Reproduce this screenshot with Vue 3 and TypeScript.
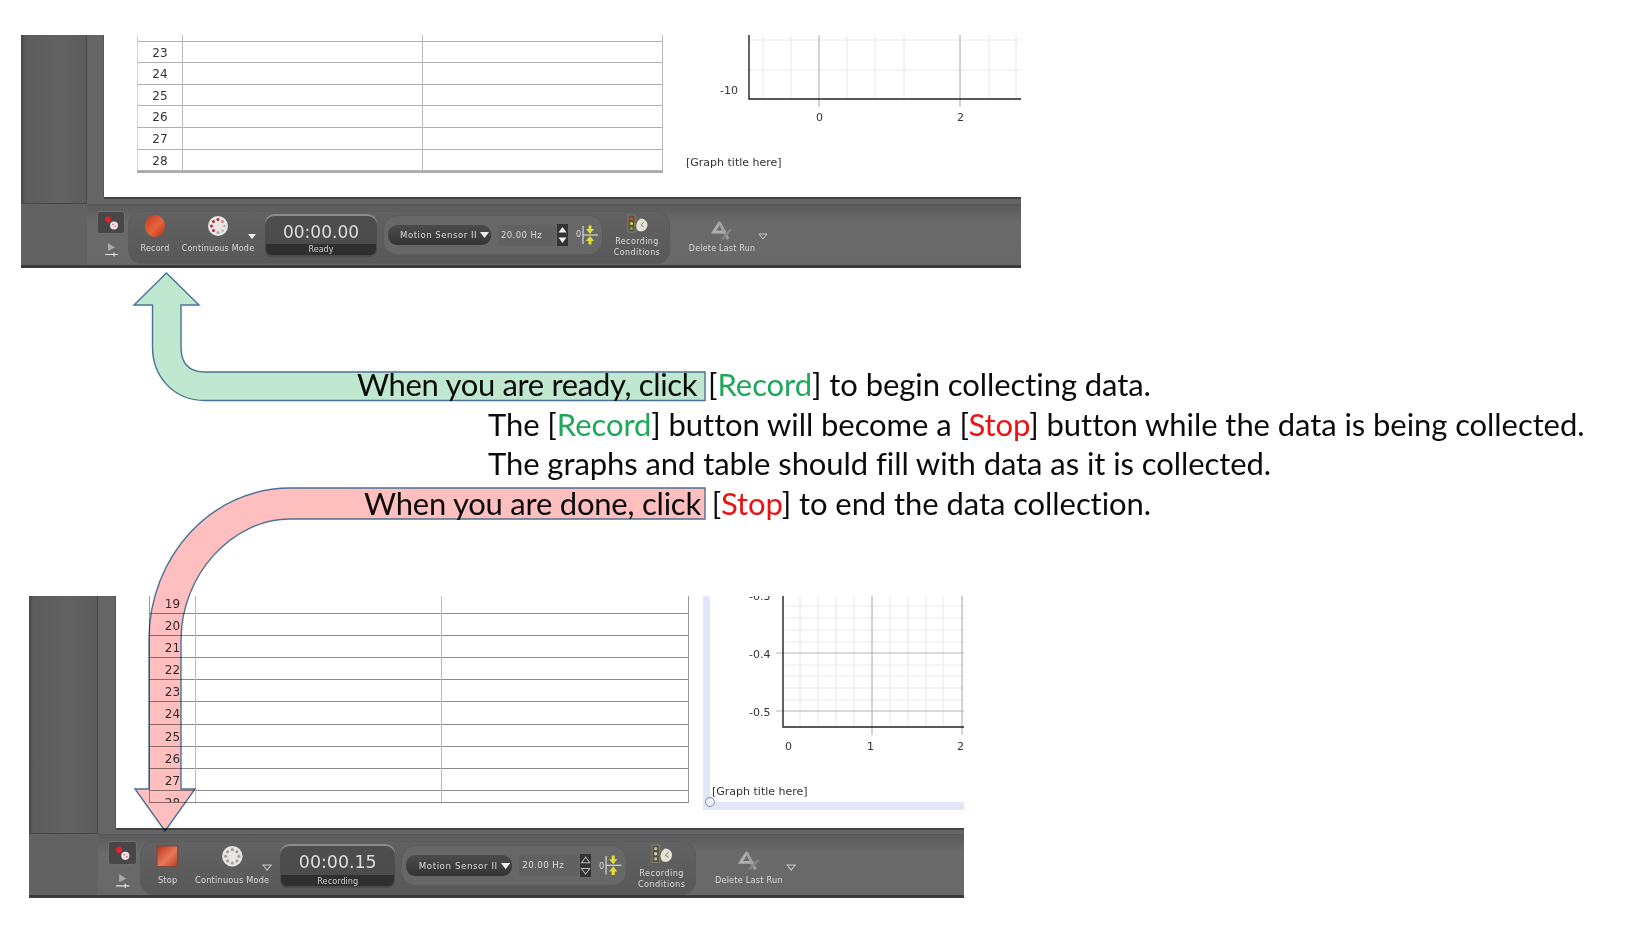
<template>
  <div class="slide">
    <section
      v-for="shot in shots"
      :key="shot.name"
      class="shot"
      :class="`shot-${shot.name}`"
    >
      <div class="side-panel"></div>
      <div class="stage">
        <div class="sheet">
          <div class="data-table">
            <div v-for="n in shot.rows" :key="n" class="data-row">
              <span class="row-num">{{ n }}</span>
              <span></span>
              <span></span>
            </div>
          </div>

          <svg class="graph" :viewBox="shot.graph.viewBox" :width="shot.graph.w" :height="shot.graph.h">
            <template v-if="shot.name === 'bottom'">
              <rect x="702" y="596" width="7" height="214" fill="#e2e7f8" />
              <rect x="702" y="802" width="261" height="8" fill="#e2e7f8" />
              <circle cx="709" cy="802" r="4.5" fill="#eef1fb" stroke="#7488b8" />
            </template>
            <line
              v-for="x in shot.graph.minorX"
              :key="'mx' + x"
              :x1="x" :x2="x" :y1="shot.graph.top" :y2="shot.graph.axisY"
              stroke="#e8e8e8"
            />
            <line
              v-for="y in shot.graph.minorY"
              :key="'my' + y"
              :x1="shot.graph.axisX" :x2="shot.graph.right" :y1="y" :y2="y"
              stroke="#ebebeb"
            />
            <line
              v-for="x in shot.graph.majorX"
              :key="'jx' + x"
              :x1="x" :x2="x" :y1="shot.graph.top" :y2="shot.graph.axisY + 8"
              stroke="#a6a6a6"
            />
            <line
              v-for="y in shot.graph.majorY"
              :key="'jy' + y"
              :x1="shot.graph.axisX - 7" :x2="shot.graph.right" :y1="y" :y2="y"
              stroke="#b4b4b4"
            />
            <path
              :d="`M${shot.graph.axisX} ${shot.graph.top}V${shot.graph.axisY}H${shot.graph.right}`"
              fill="none"
              stroke="#222"
              stroke-width="1.4"
            />
            <text
              v-for="t in shot.graph.labels"
              :key="t.s"
              :x="t.x" :y="t.y"
              class="graph-label"
            >{{ t.s }}</text>
            <text :x="shot.graph.titleX" :y="shot.graph.titleY" class="graph-label">[Graph title here]</text>
          </svg>
        </div>
      </div>

      <div class="bar">
        <div class="toolbar">
          <div class="mode-col">
            <div class="mode-btn">
              <svg width="20" height="20" viewBox="0 0 20 20">
                <circle cx="7" cy="6.5" r="3" fill="#e8202a" />
                <circle cx="13" cy="12.5" r="4" fill="#f3dde0" />
                <circle cx="12" cy="11.5" r="0.8" fill="#c06a74" />
                <circle cx="14.5" cy="13.5" r="0.8" fill="#c06a74" />
              </svg>
            </div>
            <svg class="flag" width="16" height="16" viewBox="0 0 16 16">
              <path d="M4 1l7 4.5L4 9z" fill="#a8a8a8" />
              <path d="M1 12.5h13M10 10.5v4" stroke="#e4e4e4" stroke-width="1.2" fill="none" />
            </svg>
          </div>

          <div class="main-group">
            <div class="tool tool-record">
              <svg v-if="shot.active" width="24" height="24" viewBox="0 0 24 24">
                <defs>
                  <linearGradient id="stopFill" x1="0" y1="0" x2="1" y2="1">
                    <stop offset="0" stop-color="#b5321c" />
                    <stop offset="0.55" stop-color="#e9795a" />
                    <stop offset="1" stop-color="#b83a22" />
                  </linearGradient>
                </defs>
                <rect x="2" y="2" width="20" height="20" fill="url(#stopFill)" stroke="#7c4a3e" />
              </svg>
              <svg v-else width="24" height="24" viewBox="0 0 24 24">
                <defs>
                  <linearGradient id="recFill" x1="0" y1="0" x2="1" y2="1">
                    <stop offset="0" stop-color="#c5391c" />
                    <stop offset="0.55" stop-color="#e8643c" />
                    <stop offset="1" stop-color="#b0301a" />
                  </linearGradient>
                </defs>
                <ellipse cx="12" cy="12" rx="10" ry="11" fill="url(#recFill)" />
              </svg>
              <span>{{ shot.action }}</span>
            </div>

            <div class="tool tool-mode">
              <svg width="24" height="24" viewBox="0 0 24 24">
                <circle cx="12" cy="12" r="10" fill="#e9e6e4" />
                <circle
                  v-for="(d, i) in dots"
                  :key="i"
                  :cx="d.x" :cy="d.y" r="1.5"
                  :fill="shot.active ? '#9b9b9b' : d.c"
                />
              </svg>
              <span>Continuous Mode</span>
              <svg class="menu-caret" width="10" height="7" viewBox="0 0 10 7">
                <path
                  d="M1 1h8L5 6z"
                  :fill="shot.active ? 'none' : '#eee'"
                  :stroke="shot.active ? '#c8c8c8' : 'none'"
                />
              </svg>
            </div>

            <div class="timer">
              <div class="timer-value">{{ shot.time }}</div>
              <div class="timer-status">{{ shot.status }}</div>
            </div>

            <div class="sensor-group">
              <div class="sensor-select">
                <span>Motion Sensor II</span>
                <svg width="9" height="6" viewBox="0 0 9 6"><path d="M0 0h9L4.5 6z" fill="#eee" /></svg>
              </div>
              <div class="rate-field">20.00 Hz</div>
              <div class="rate-steps">
                <svg width="11" height="11" viewBox="0 0 11 11">
                  <path
                    d="M1.5 8.5h8L5.5 3z"
                    :fill="shot.active ? 'none' : '#eee'"
                    :stroke="shot.active ? '#bbb' : 'none'"
                  />
                </svg>
                <svg width="11" height="11" viewBox="0 0 11 11">
                  <path
                    d="M1.5 2.5h8L5.5 8z"
                    :fill="shot.active ? 'none' : '#eee'"
                    :stroke="shot.active ? '#bbb' : 'none'"
                  />
                </svg>
              </div>
              <div class="trigger">
                <span>0</span>
                <svg width="18" height="22" viewBox="0 0 18 22">
                  <path d="M2 2v18M2 11h15" stroke="#eee" stroke-width="1" fill="none" />
                  <path d="M7.5 1.5h3V5h2.5L9 10 5 5h2.5zM7.5 20.5h3V17h2.5L9 12l-4 5h2.5z" fill="#e4dc3a" />
                </svg>
              </div>
            </div>

            <div class="tool tool-cond">
              <svg width="24" height="22" viewBox="0 0 24 22">
                <rect x="3" y="1" width="7" height="17" fill="#55503f" stroke="#9a8f74" stroke-width=".7" />
                <circle cx="6.5" cy="4.5" r="1.6" :fill="shot.active ? '#bdbdbd' : '#c9503a'" />
                <circle cx="6.5" cy="9.5" r="1.6" :fill="shot.active ? '#cfcfcf' : '#e6cf3a'" />
                <circle cx="6.5" cy="14.5" r="1.6" :fill="shot.active ? '#bdbdbd' : '#6db05a'" />
                <circle cx="16" cy="11" r="6.5" fill="#e6e2d4" />
                <path d="M16 4.5a6.5 6.5 0 0 0-3 12.3a8 8 0 0 1 3-12.3z" fill="#6a6552" />
                <path d="M16 11l3-3M16 11l3 2" stroke="#8f8a7a" fill="none" />
              </svg>
              <span>Recording<br />Conditions</span>
            </div>
          </div>

          <div class="tool tool-delete">
            <svg width="24" height="22" viewBox="0 0 24 22">
              <path d="M10 3L3.5 13H16" stroke="#b0b0b0" stroke-width="2.8" fill="none" />
              <path d="M9.5 3.5L18 20" stroke="#a0a0a0" stroke-width="2.8" fill="none" />
              <path d="M21 10.5L12 20" stroke="#868686" stroke-width="2.4" fill="none" />
            </svg>
            <span>Delete Last Run</span>
            <svg class="delete-caret" width="10" height="7" viewBox="0 0 10 7">
              <path d="M1 1h8L5 6z" fill="none" stroke="#c8c8c8" />
            </svg>
          </div>
        </div>
      </div>
    </section>

    <!-- callout arrows sit on top of the two screenshots -->
    <svg class="arrows" width="1642" height="930" viewBox="0 0 1642 930">
      <path
        d="M166.5 273L199 305H181V347Q181 372 205 372H705V400.5H205C173 400.5 152.5 376 152.5 347V305H134Z"
        fill="#c0e8d0"
        stroke="#4a7196"
        stroke-width="1.4"
      />
      <path
        d="M705 488V519H290C232 519 181 575 181 640V789H195L165 831L135 789H149V640C149 556 212 488 290 488Z"
        fill="#ffbfbf"
        stroke="#4a7196"
        stroke-width="1.4"
      />
    </svg>

    <div class="notes">
      <p><span class="tight-a">When you are ready, click</span> <i class="gap"></i>[<b class="go">Record</b>] to begin collecting data.</p>
      <p class="indent">The [<b class="go">Record</b>] button will become a [<b class="halt">Stop</b>] button while the data is being collected.</p>
      <p class="indent">The graphs and table should fill with data as it is collected.</p>
      <p class="done"><span class="tight-b">When you are done, click</span> <i class="gap"></i>[<b class="halt">Stop</b>] to end the data collection.</p>
    </div>
  </div>
</template>

<script setup lang="ts">
const range = (from: number, to: number) => Array.from({ length: to - from + 1 }, (_, i) => from + i)

// ring of dots on the Continuous Mode ball
const dots = [
  { x: 12, y: 5.5, c: '#b32a3c' },
  { x: 7.5, y: 7.5, c: '#b32a3c' },
  { x: 16.5, y: 7.5, c: '#c9808a' },
  { x: 5.5, y: 12, c: '#b32a3c' },
  { x: 18.5, y: 12, c: '#bdbdbd' },
  { x: 7.5, y: 16.5, c: '#b32a3c' },
  { x: 16.5, y: 16.5, c: '#bdbdbd' },
  { x: 12, y: 18.5, c: '#a8a8a8' },
]

const shots = [
  {
    name: 'top',
    rows: range(22, 28),
    action: 'Record',
    active: false,
    time: '00:00.00',
    status: 'Ready',
    graph: {
      viewBox: '680 35 341 140',
      w: 341,
      h: 140,
      top: 35,
      axisX: 749,
      axisY: 99,
      right: 1021,
      minorX: [763, 791, 847, 875, 904, 989, 1016],
      minorY: [40, 70],
      majorX: [819, 960],
      majorY: [] as number[],
      labels: [
        { s: '-10', x: 720, y: 94 },
        { s: '0', x: 816, y: 121 },
        { s: '2', x: 957, y: 121 },
      ],
      titleX: 686,
      titleY: 166,
    },
  },
  {
    name: 'bottom',
    rows: range(19, 28),
    action: 'Stop',
    active: true,
    time: '00:00.15',
    status: 'Recording',
    graph: {
      viewBox: '702 596 261 214',
      w: 261,
      h: 214,
      top: 596,
      axisX: 782,
      axisY: 727,
      right: 963,
      minorX: [799, 817, 835, 853, 889, 907, 925, 942],
      minorY: [606, 618, 630, 642, 665, 676, 688, 700],
      majorX: [871, 961],
      majorY: [653, 711],
      labels: [
        { s: '-0.3', x: 748, y: 600 },
        { s: '-0.4', x: 748, y: 658 },
        { s: '-0.5', x: 748, y: 716 },
        { s: '0', x: 784, y: 750 },
        { s: '1', x: 866, y: 750 },
        { s: '2', x: 956, y: 750 },
      ],
      titleX: 711,
      titleY: 795,
    },
  },
]
</script>

<style scoped>
.slide {
  position: relative;
  width: 1642px;
  height: 930px;
  overflow: hidden;
  background: #fff;
}

/* the two pasted screenshots */
.shot {
  position: absolute;
  display: grid;
  grid-template-columns: var(--side) 1fr;
  grid-template-rows: 1fr 64px;
  font-family: 'DejaVu Sans', sans-serif;
  filter: blur(0.35px);
}

.shot-top {
  --side: 66px;
  --table-left: 33px;
  left: 21px;
  top: 35px;
  width: 1000px;
  height: 233px;
}

.shot-bottom {
  --side: 69px;
  --table-left: 33px;
  left: 29px;
  top: 596px;
  width: 934px;
  height: 302px;
}

.side-panel {
  background: linear-gradient(90deg, #444 0, #5c5c5c 4px, #626262 60%, #5c5c5c 100%);
  border-right: 1px solid #484848;
  border-bottom: 1px solid #484848;
}

.stage {
  display: flex;
  padding: 0 0 7px 17px;
  background: #656565;
}

.shot-bottom .stage {
  padding: 0 0 6px 18px;
}

.sheet {
  flex: 1;
  display: flex;
  overflow: hidden;
  background: #fff;
  box-shadow: -1px 0 0 #555, 0 2px 0 #444;
}

.data-table {
  flex: none;
  width: 526px;
  height: 137px;
  margin-top: -15px;
  margin-left: var(--table-left);
  overflow: hidden;
  border-bottom: 2px solid #aaa;
  color: #333;
  font-size: 12px;
}

.shot-top .data-table {
  height: 153px;
  box-sizing: border-box;
}

.shot-bottom .data-table {
  width: 539px;
  height: 210px;
  margin-top: -4px;
  border-bottom: 1px solid #888;
  border-right: 1px solid #999;
}

.data-row {
  display: grid;
  grid-template-columns: 45px 240px 1fr;
  box-sizing: border-box;
  height: 21.6px;
  border-bottom: 1px solid #b0b0b0;
  border-left: 1px solid #d4d4d4;
}

.shot-bottom .data-row {
  grid-template-columns: 46px 246px 1fr;
  height: 22.1px;
  border-bottom-color: #8c8c8c;
  border-left-color: #999;
}

.data-row span {
  border-right: 1px solid #bbb;
}

.shot-bottom .data-row span:last-child {
  border-right: 0;
}

.data-row .row-num {
  line-height: 23px;
  text-align: center;
}

.shot-bottom .row-num {
  line-height: 25px;
}

.graph {
  flex: none;
  margin-left: 17px;
}

.shot-bottom .graph {
  margin-left: 14px;
}

.graph-label {
  fill: #333;
  font-family: 'DejaVu Sans', sans-serif;
  font-size: 11px;
}

/* bottom strip of the app */
.bar {
  grid-column: 1 / 3;
  box-sizing: border-box;
  padding-left: var(--side);
  background: #626262;
  border-bottom: 3px solid #3a3a3a;
}

.toolbar {
  display: flex;
  align-items: flex-start;
  height: 100%;
  padding: 6px 0 0 10px;
  background: linear-gradient(#5b5b5b, #6a6a6a 30%, #686868);
  border-top: 1px solid #555;
  box-sizing: border-box;
  color: #dcdcdc;
  font-size: 8px;
  line-height: 10px;
}

.shot-bottom .toolbar {
  zoom: 1.025;
}

.mode-col {
  flex: none;
  width: 28px;
}

.mode-btn {
  display: flex;
  align-items: center;
  justify-content: center;
  height: 23px;
  border: 1px solid #6e6e6e;
  border-radius: 3px;
  box-sizing: border-box;
  background: #474747;
}

.flag {
  display: block;
  margin: 8px auto 0;
  transform: translateX(1px);
}

.main-group {
  flex: none;
  display: flex;
  align-items: flex-start;
  box-sizing: border-box;
  width: 542px;
  height: 53px;
  margin-left: 3px;
  padding: 3px 8px 0;
  border-radius: 14px;
  background: linear-gradient(#626262, #585858);
  box-shadow: inset 0 0 0 1px #5c5c5c;
}

.tool {
  position: relative;
  flex: none;
  display: flex;
  flex-direction: column;
  align-items: center;
  letter-spacing: 0.2px;
  text-align: center;
  white-space: nowrap;
}

.tool-record {
  width: 38px;
  gap: 6px;
}

.tool-mode {
  width: 76px;
  margin-left: 6px;
  gap: 6px;
}

.menu-caret {
  position: absolute;
  right: -1px;
  top: 19px;
}

.timer {
  flex: none;
  width: 112px;
  height: 43px;
  box-sizing: border-box;
  margin: 0 0 0 9px;
  padding: 3px 1px 1px;
  border-radius: 9px 9px 7px 7px;
  background: linear-gradient(#4e4e4e, #4a4a4a);
  box-shadow: inset 0 2px 0 #8c8c8c;
}

.timer-value {
  height: 27px;
  color: #dedede;
  font-size: 17px;
  line-height: 30px;
  text-align: center;
}

.timer-status {
  height: 11px;
  border-radius: 0 0 6px 6px;
  background: #2f2f2f;
  color: #cfcfcf;
  line-height: 12px;
  text-align: center;
}

.sensor-group {
  flex: none;
  display: flex;
  align-items: center;
  box-sizing: border-box;
  width: 220px;
  height: 40px;
  margin: 1px 0 0 6px;
  padding-left: 4px;
  border: 1px solid #5a5a5a;
  border-radius: 14px;
  background: #676767;
}

.sensor-select {
  flex: none;
  display: flex;
  align-items: center;
  justify-content: space-between;
  box-sizing: border-box;
  width: 103px;
  height: 20px;
  padding: 0 2px 0 12px;
  border-radius: 9px;
  background: linear-gradient(#4c4c4c, #333);
  font-size: 8.5px;
  letter-spacing: 0.55px;
  white-space: nowrap;
}

.rate-field {
  flex: none;
  width: 58px;
  height: 21px;
  box-sizing: border-box;
  margin-left: 7px;
  padding-left: 3px;
  border-radius: 3px;
  background: #616161;
  font-size: 8.5px;
  letter-spacing: 0.4px;
  line-height: 21px;
}

.rate-steps {
  flex: none;
  width: 11px;
  margin-left: 1px;
  background: #333;
  line-height: 0;
}

.trigger {
  flex: none;
  display: flex;
  align-items: center;
  margin-left: 8px;
  gap: 0;
}

.tool-cond {
  width: 50px;
  margin-left: 9px;
  gap: 1px;
  letter-spacing: 0.4px;
}

.tool-cond span {
  line-height: 10.5px;
}

.tool-delete {
  width: 70px;
  margin: 8px 0 0 17px;
  gap: 3px;
}

.delete-caret {
  position: absolute;
  right: -11px;
  top: 14px;
}

/* callouts */
.arrows {
  position: absolute;
  left: 0;
  top: 0;
  mix-blend-mode: multiply;
  pointer-events: none;
}

.notes {
  position: absolute;
  left: 357px;
  top: 365px;
  color: #0b0b0b;
  font-family: Lato, sans-serif;
  font-size: 31px;
  letter-spacing: -0.07px;
  line-height: 39.7px;
  white-space: nowrap;
}

.notes p {
  margin: 0;
}

.notes b {
  font-weight: 400;
}

.notes .go {
  color: #1fa85a;
}

.notes .halt {
  color: #ee1111;
}

.notes .tight-a {
  letter-spacing: -0.33px;
}

.notes .tight-b {
  letter-spacing: -0.23px;
}

.notes .gap {
  display: inline-block;
  width: 3px;
}

.notes .indent {
  padding-left: 131px;
}

.notes .done {
  padding-left: 7px;
}
</style>
